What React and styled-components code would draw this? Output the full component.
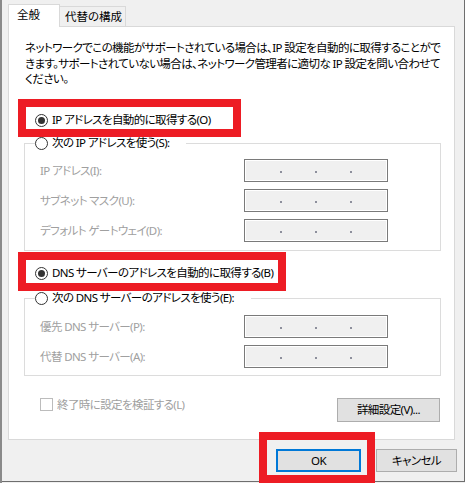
import React from "react";
import styled, { createGlobalStyle } from "styled-components";

const GlobalStyle = createGlobalStyle`
  html, body { margin: 0; padding: 0; background: #f0f0f0; }
  body {
    width: 465px; height: 483px; overflow: hidden;
    font-family: "Noto Sans", "Noto Sans CJK JP", sans-serif;
    font-size: 11.5px;
    color: #000;
    font-feature-settings: "palt";
    letter-spacing: -0.6px;
  }
  * { box-sizing: border-box; }
`;

const Screen = styled.div`
  position: relative;
  display: flex;
  width: 465px;
  height: 483px;
  overflow: hidden;
  background: #f0f0f0;
`;

const BackEdge = styled.div`
  flex: none;
  width: 2px;
  height: 100%;
  background: #8a8a8a;
`;

const Dialog = styled.div`
  flex: 1;
  height: 482px;
  border-right: 1px solid #6e6e6e;
  border-bottom: 1px solid #6e6e6e;
  padding: 4px 7px 0 6px;
  display: flex;
  flex-direction: column;
`;

const TabRow = styled.div`
  display: flex;
  align-items: flex-end;
  height: 22px;
`;

const Tab = styled.div`
  position: relative;
  z-index: ${(p) => (p.$active ? 1 : 0)};
  height: ${(p) => (p.$active ? 23 : 20)}px;
  width: ${(p) => p.$w}px;
  margin-bottom: ${(p) => (p.$active ? -1 : 0)}px;
  padding: 2px 0 0 ${(p) => p.$pad}px;
  background: ${(p) => (p.$active ? "#fff" : "#f0f0f0")};
  border: 1px solid #d9d9d9;
  border-bottom: none;
  ${(p) => (p.$active ? "" : "border-left: none;")}
  line-height: 16px;
  white-space: nowrap;
  letter-spacing: 0;
`;

const Panel = styled.div`
  width: 447px;
  height: 414px;
  background: #fff;
  border: 1px solid #d9d9d9;
  display: flex;
  flex-direction: column;
`;

const Description = styled.p`
  margin: 13px 0 0 16px;
  line-height: 15.5px;
  white-space: nowrap;
`;

const RadioOption = styled.label`
  display: flex;
  align-items: center;
  gap: 4px;
  height: 16px;
  margin: ${(p) => p.$mt || 0}px 0 0 ${(p) => p.$ml || 0}px;
  white-space: nowrap;
  line-height: 16px;
`;

const Circle = styled.span`
  position: relative;
  flex: none;
  width: 13px;
  height: 13px;
  border-radius: 50%;
  border: 1px solid #333;
  background: #fff;
  &::after {
    content: "";
    display: ${(p) => (p.$on ? "block" : "none")};
    position: absolute;
    left: 2px;
    top: 2px;
    width: 7px;
    height: 7px;
    border-radius: 50%;
    background: #333;
  }
`;

const Group = styled.fieldset`
  width: 417px;
  margin: ${(p) => p.$mt}px 0 0 15px;
  padding: 0 0 ${(p) => p.$pb}px 0;
  border: 1px solid #dcdcdc;
  min-width: 0;
`;

const Legend = styled.legend`
  margin-left: 10px;
  padding: 0 17px 0 0;
`;

const Fields = styled.div`
  display: grid;
  grid-template-columns: 204px 144px;
  row-gap: 7px;
  align-items: center;
  padding: ${(p) => p.$pt}px 0 0 15px;
`;

const FieldLabel = styled.span`
  color: #a0a0a0;
  white-space: nowrap;
  line-height: 16px;
`;

const IpBox = styled.div`
  height: 23px;
  border: 1px solid #7a7a7a;
  box-shadow: inset 0 0 0 1px #fff;
  background: #f0f0f0;
  display: flex;
  justify-content: center;
  align-items: flex-end;
  gap: 33px;
  padding-bottom: 8px;
`;

const Dot = styled.span`
  width: 2px;
  height: 2px;
  background: #8d8f9c;
`;

const BottomRow = styled.div`
  display: flex;
  justify-content: space-between;
  align-items: flex-start;
  margin: 22px 14px 0 31px;
`;

const CheckOption = styled.label`
  display: flex;
  align-items: center;
  gap: 4px;
  color: #a0a0a0;
  height: 13px;
  line-height: 16px;
  white-space: nowrap;
`;

const Box = styled.span`
  flex: none;
  width: 13px;
  height: 13px;
  border: 1px solid #bcbcbc;
  background: #fff;
`;

const Button = styled.button`
  width: ${(p) => p.$w}px;
  height: ${(p) => p.$h || 23}px;
  padding: 0;
  font: inherit;
  letter-spacing: inherit;
  color: #000;
  background: #e1e1e1;
  border: ${(p) => (p.$primary ? "2px solid #0078d7" : "1px solid #adadad")};
  white-space: nowrap;
  line-height: 16px;
`;

const ButtonRow = styled.div`
  display: flex;
  justify-content: flex-end;
  gap: 15px;
  margin-top: 9px;
`;

const Marker = styled.div`
  position: absolute;
  left: ${(p) => p.$x}px;
  top: ${(p) => p.$y}px;
  width: ${(p) => p.$w}px;
  height: ${(p) => p.$h}px;
  border: 8px solid #ed1c24;
  pointer-events: none;
`;

const Ip = () => (
  <IpBox>
    <Dot />
    <Dot />
    <Dot />
  </IpBox>
);

export default function App() {
  return (
    <Screen>
      <GlobalStyle />
      <BackEdge />
      <Dialog>
        <TabRow>
          <Tab $active $w={52} $pad={8}>全般</Tab>
          <Tab $w={66} $pad={5}>代替の構成</Tab>
        </TabRow>
        <Panel>
          <Description>
            ネットワークでこの機能がサポートされている場合は、IP 設定を自動的に取得することがで
            <br />
            きます。サポートされていない場合は、ネットワーク管理者に適切な IP 設定を問い合わせて
            <br />
            ください。
          </Description>

          <RadioOption $mt={25.5} $ml={26}>
            <Circle $on />
            IP アドレスを自動的に取得する(O)
          </RadioOption>

          <Group $mt={7} $pb={8}>
            <Legend>
              <RadioOption>
                <Circle />
                次の IP アドレスを使う(S):
              </RadioOption>
            </Legend>
            <Fields $pt={8}>
              <FieldLabel>IP アドレス(I):</FieldLabel>
              <Ip />
              <FieldLabel>サブネット マスク(U):</FieldLabel>
              <Ip />
              <FieldLabel>デフォルト ゲートウェイ(D):</FieldLabel>
              <Ip />
            </Fields>
          </Group>

          <RadioOption $mt={14} $ml={26}>
            <Circle $on />
            DNS サーバーのアドレスを自動的に取得する(B)
          </RadioOption>

          <Group $mt={9} $pb={7}>
            <Legend>
              <RadioOption>
                <Circle />
                次の DNS サーバーのアドレスを使う(E):
              </RadioOption>
            </Legend>
            <Fields $pt={9}>
              <FieldLabel>優先 DNS サーバー(P):</FieldLabel>
              <Ip />
              <FieldLabel>代替 DNS サーバー(A):</FieldLabel>
              <Ip />
            </Fields>
          </Group>

          <BottomRow>
            <CheckOption>
              <Box />
              終了時に設定を検証する(L)
            </CheckOption>
            <Button $w={103} $h={24}>詳細設定(V)...</Button>
          </BottomRow>
        </Panel>
        <ButtonRow>
          <Button $primary $w={85}>OK</Button>
          <Button $w={81}>キャンセル</Button>
        </ButtonRow>
      </Dialog>
      <Marker $x={18} $y={99} $w={223} $h={38} />
      <Marker $x={18} $y={252} $w={268} $h={39} />
      <Marker $x={259} $y={432} $w={116} $h={51} />
    </Screen>
  );
}
